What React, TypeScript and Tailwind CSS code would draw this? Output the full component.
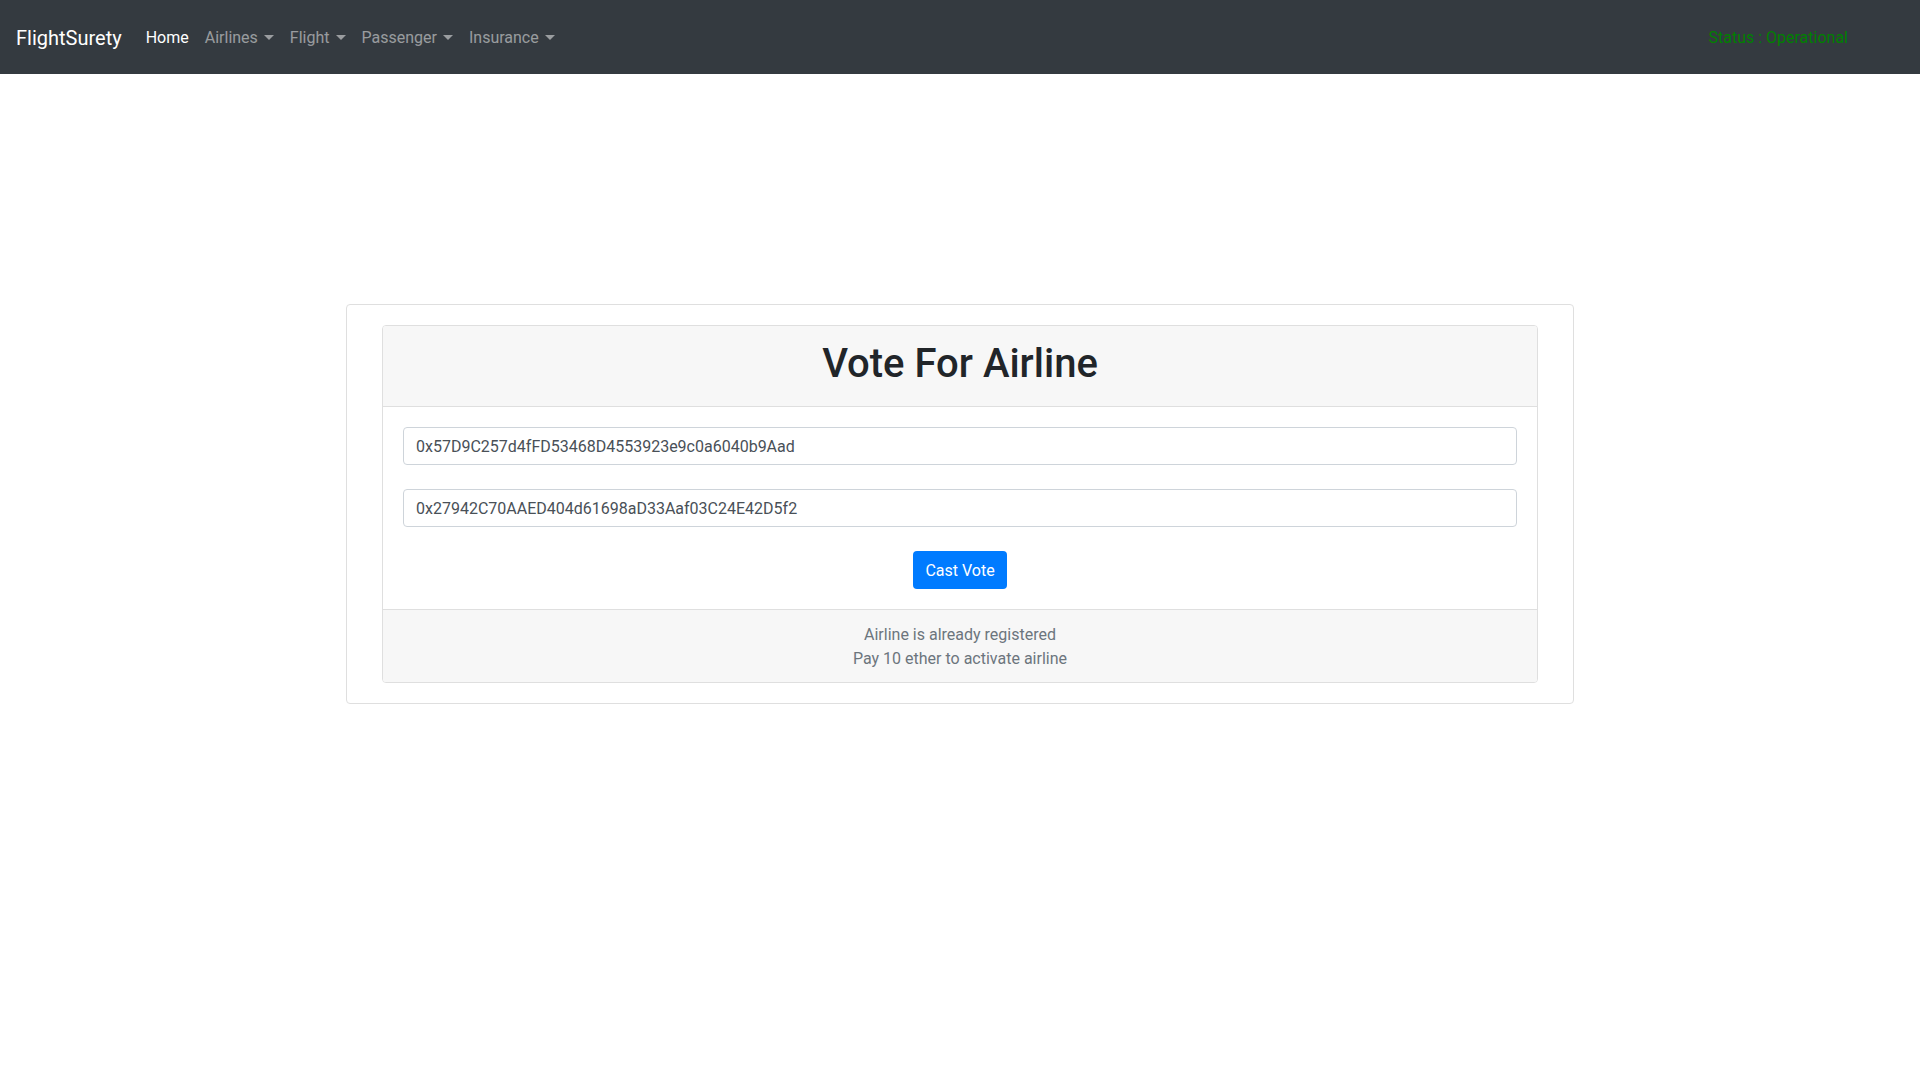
import React from "react";

const FONT = `Roboto, "Liberation Sans", sans-serif`;

function Caret() {
  return (
    <span className="ml-[6px] inline-block align-[3px] border-t-[5px] border-x-[5px] border-x-transparent border-t-current" />
  );
}

export default function App() {
  const links = ["Airlines", "Flight", "Passenger", "Insurance"];
  return (
    <div className="min-h-screen bg-white" style={{ fontFamily: FONT }}>
      <nav className="h-[74px] bg-[#343a40] flex items-center pl-4 pr-[72px] pt-[2px]">
        <a className="text-[20px] text-white mr-4 leading-[30px]">FlightSurety</a>
        <ul className="flex items-center">
          <li className="px-2 text-white text-base">Home</li>
          {links.map((l) => (
            <li key={l} className="px-2 text-white/50 text-base whitespace-nowrap">
              {l}
              <Caret />
            </li>
          ))}
        </ul>
        <div className="ml-auto text-base text-[#008000]">Status : Operational</div>
      </nav>

      <div className="mt-[230px] w-[1228px] mx-auto border border-[#dfdfdf] rounded-[4px] px-[35px] py-5">
        <div className="border border-[#dfdfdf] rounded-[4px] overflow-hidden">
          <div className="bg-[#f7f7f7] border-b border-[#dfdfdf] px-5 pt-[14px] pb-[10px]">
            <h1 className="text-center text-[40px] font-medium leading-[1.2] mb-2 text-[#212529]">Vote For Airline</h1>
          </div>
          <div className="p-5 flex flex-col items-center">
            <input
              readOnly
              value="0x57D9C257d4fFD53468D4553923e9c0a6040b9Aad"
              className="w-full h-[38px] border border-[#ced4da] rounded-[4px] px-3 text-base text-[#495057] mb-6 outline-none"
            />
            <input
              readOnly
              value="0x27942C70AAED404d61698aD33Aaf03C24E42D5f2"
              className="w-full h-[38px] border border-[#ced4da] rounded-[4px] px-3 text-base text-[#495057] mb-6 outline-none"
            />
            <button className="h-[38px] px-3 pt-px bg-[#007bff] text-white text-base rounded-[4px] leading-6">Cast Vote</button>
          </div>
          <div className="bg-[#f7f7f7] border-t border-[#dfdfdf] px-5 pt-[13px] pb-[11px] text-center text-base leading-6 text-[#6c757d]">
            <div>Airline is already registered</div>
            <div>Pay 10 ether to activate airline</div>
          </div>
        </div>
      </div>
    </div>
  );
}
